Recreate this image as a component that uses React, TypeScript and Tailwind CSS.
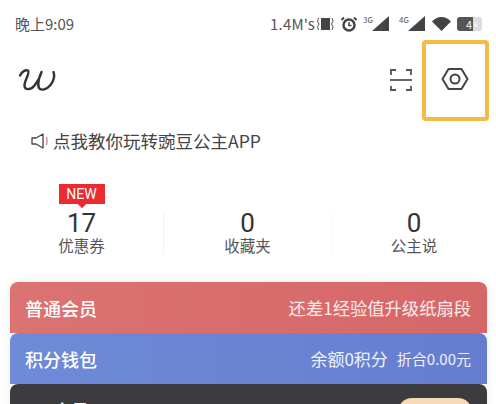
const FONT = "font-['Noto_Sans_CJK_SC','Noto_Sans',sans-serif]";

function StatusIcons() {
  return (
    <div className="flex items-center">
      <span className="text-[15px] leading-none text-[#555] tracking-[0.2px]">1.4M's</span>
      <svg width="18" height="16" viewBox="0 0 18 16" className="ml-[1px]" fill="none">
        <rect x="5" y="2" width="9" height="12" fill="#444" />
        <path d="M2.500 2 1.500 5 3 8 1.500 11l1 3M16 2l1 3-1.500 3 1.500 3-1 3" stroke="#555" strokeWidth="1" />
      </svg>
      <svg width="18" height="16" viewBox="0 0 18 16" className="ml-[6px]" fill="none">
        <circle cx="9" cy="9" r="5.500" stroke="#444" strokeWidth="2.500" />
        <path d="M9 6v3.500h2.500" stroke="#444" strokeWidth="1.500" />
        <path d="M1.500 4 4 1.500M16.500 4 14 1.500" stroke="#444" strokeWidth="2" />
      </svg>
      <span className="ml-[5px] -mt-[8px] text-[8px] leading-none text-[#555]">3G</span>
      <svg width="18" height="15" viewBox="0 0 18 15" className="-ml-[1px]">
        <path d="M17 0v15H0z" fill="#444" />
      </svg>
      <span className="ml-[9px] -mt-[8px] text-[8px] leading-none text-[#555]">4G</span>
      <svg width="18" height="15" viewBox="0 0 18 15" className="-ml-[2px]">
        <path d="M18 0v15H1z" fill="#444" />
      </svg>
      <svg width="19" height="14" viewBox="0 0 19 14" className="ml-[7px]">
        <path d="M0 4.500C2.500 1.800 5.500 0 9.500 0s7 1.800 9.500 4.500L9.500 14z" fill="#444" />
      </svg>
      <div className="ml-[6px] flex h-[14px] w-[25px] items-center rounded-[3px] bg-[#ddd]">
        <div className="flex h-[14px] w-[16px] items-center justify-end rounded-l-[3px] bg-[#555] pr-[1px]">
          <span className="text-[11px] leading-[14px] text-white">4</span>
        </div>
        <span className="pl-[1px] text-[7px] leading-[14px] text-white">6</span>
      </div>
    </div>
  );
}

function Stat({ value, label, badge }: { value: string; label: string; badge?: boolean }) {
  return (
    <div className="relative flex flex-col items-center pt-[27px]">
      {badge && (
        <div className="absolute left-1/2 top-0 flex h-[20px] w-[46px] -translate-x-1/2 items-center justify-center bg-[#ec2a30] font-['Roboto',sans-serif] text-[14px] leading-none text-white">
          NEW
          <div className="absolute -bottom-[3px] left-1/2 h-[6px] w-[6px] -translate-x-1/2 rotate-45 bg-[#ec2a30]" />
        </div>
      )}
      <div className="text-[26px] leading-[24px] text-[#333] font-['Roboto',sans-serif]">{value}</div>
      <div className="text-[15.500px] leading-[20px] text-[#555]">{label}</div>
    </div>
  );
}

export default function App() {
  return (
    <div className={`h-[404px] w-[496px] overflow-hidden bg-white ${FONT}`}>
      <div className="flex h-[40px] items-center justify-between pl-[15px] pr-[14px] pt-[7px]">
        <span className="text-[15px] leading-none text-[#555]">晚上9:09</span>
        <StatusIcons />
      </div>

      <div className="flex h-[81px] items-center pl-[18px] pr-[7px]">
        <svg width="40" height="26" viewBox="0 0 40 26" fill="none" className="-mt-[2px]">
          <path
            d="M2 8.500C4 4.500 7.500 2.500 10 3.500c2.500 2-4 10.500-3.500 15.500.5 4.500 6.500 4 10-.5 3-4 6-9.500 7-13.500-2 4-4.500 12-2.500 16 2 3 8 1.500 11.500-3 3-4 4.500-9 3-13"
            stroke="#333"
            strokeWidth="2.400"
            strokeLinecap="round"
            strokeLinejoin="round"
          />
        </svg>
        <div className="flex-1" />
        <svg width="24" height="24" viewBox="0 0 24 24" fill="none" stroke="#555" strokeWidth="1.800" className="mr-[9px] -mt-[2px]">
          <path d="M2 7V2h5M17 2h5v5M2 18v4h5M17 22h5v-4" />
          <path d="M1 12h22" />
        </svg>
        <div className="flex h-[81px] w-[67px] items-center justify-center rounded-[4px] border-[4px] border-[#f4ba41]">
          <svg width="28" height="24" viewBox="0 0 28 24" fill="none" stroke="#444" strokeWidth="2" className="-ml-[1px] -mt-[3px]">
            <path d="M7.500 2h13L26.500 12l-6 10h-13L1.500 12z" strokeLinejoin="round" />
            <circle cx="14" cy="12" r="4.500" />
          </svg>
        </div>
      </div>

      <div className="flex h-[40px] items-center pl-[31px]">
        <svg width="18" height="16" viewBox="0 0 18 16" fill="none" stroke="#444" strokeWidth="1.300">
          <path d="M1 5h4l7-4v14l-7-4H1z" strokeLinejoin="round" />
          <path d="M15.500 4c.7 2.500.7 5.500 0 8" stroke="#c9878c" />
        </svg>
        <span className="ml-[4px] text-[17.500px] leading-none text-[#444]">点我教你玩转豌豆公主APP</span>
      </div>

      <div className="mt-[23px] grid h-[78px] grid-cols-[163px_1px_167px_1px_1fr]">
        <Stat value="17" label="优惠券" badge />
        <div className="mt-[29px] h-[42px] bg-[#f3f3f3]" />
        <Stat value="0" label="收藏夹" />
        <div className="mt-[29px] h-[42px] bg-[#f8f8f8]" />
        <Stat value="0" label="公主说" />
      </div>

      <div className="mx-[10px] mt-[20px] w-[477px] rounded-t-[8px] shadow-[0_0_10px_rgba(0,0,0,0.08)]">
        <div className="flex h-[51px] items-center justify-between rounded-t-[8px] bg-gradient-to-r from-[#dc7272] to-[#d66768] pl-[15px] pr-[16px] text-white">
          <span className="text-[18px] font-medium leading-none">普通会员</span>
          <span className="text-[17.300px] leading-none text-[#fbeaea]">还差1经验值升级纸扇段</span>
        </div>
        <div className="flex h-[51px] items-center justify-between rounded-t-[8px] bg-gradient-to-r from-[#6f8bd8] to-[#667dcf] pl-[15px] pr-[16px] text-white">
          <span className="text-[18px] font-medium leading-none">积分钱包</span>
          <div className="flex items-center gap-[9px] text-[#eef1fb]">
            <span className="text-[17px] leading-none">余额0积分</span>
            <span className="text-[15px] leading-none">折合0.00元</span>
          </div>
        </div>
        <div className="flex h-[60px] items-start justify-between rounded-t-[8px] bg-[#3c3c3e] pl-[15px] pr-[15px] pt-[14px] text-white">
          <span className="text-[18px] font-medium leading-[24px]">VIP会员</span>
          <div className="flex items-center gap-[16px]">
            <span className="text-[17px] leading-[24px] text-[#eee]">顺丰优惠超值价</span>
            <span className="flex h-[28px] w-[74px] items-center justify-center rounded-full bg-[#f5d9b8] text-[14px] text-[#3c3c3e]">立即开通</span>
          </div>
        </div>
      </div>
    </div>
  );
}
